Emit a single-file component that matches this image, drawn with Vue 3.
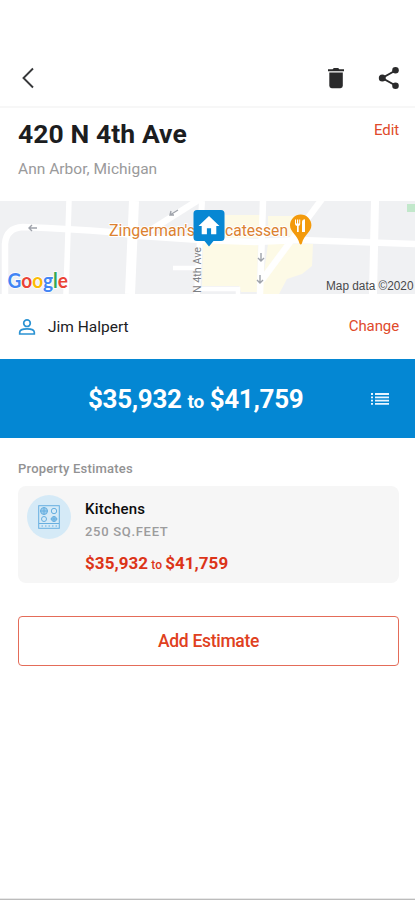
<script setup>
const property = { address: '420 N 4th Ave', city: 'Ann Arbor, Michigan', contact: 'Jim Halpert' }
const range = { low: '$35,932', high: '$41,759' }
const estimates = [{ name: 'Kitchens', area: '250 SQ.FEET', ...range }]
</script>

<template>
  <main class="screen">
    <header class="toolbar">
      <svg class="back" width="14" height="22" viewBox="0 0 14 22"><path d="M12 1.500 2.500 11 12 20.500" /></svg>
      <div class="actions">
        <svg width="18" height="22" viewBox="0 0 18 22"><path d="M1 2.300h4.700L6.800 1h4.400l1.100 1.300H17v1.900H1zM2.300 5.400h13.500v13.400a2.400 2.400 0 0 1-2.400 2.400H4.700a2.400 2.400 0 0 1-2.400-2.400z" /></svg>
        <svg width="22" height="24" viewBox="0 0 22 24"><path class="link" d="M17.500 4.500 4.200 12l13.300 7.500" /><circle cx="17.500" cy="4.300" r="3.300" /><circle cx="4.300" cy="12" r="3.500" /><circle cx="17.500" cy="19.700" r="3.300" /></svg>
      </div>
    </header>

    <section class="address">
      <div>
        <h1>{{ property.address }}</h1>
        <p>{{ property.city }}</p>
      </div>
      <a class="edit">Edit</a>
    </section>

    <svg class="map" width="415" height="93" viewBox="0 0 415 93">
      <rect width="415" height="93" fill="#f0f1f3" />
      <path d="M225 14h35v23h-35zM268 15h37l-14 20h-23zM203 42h55l-1 49h-16l-2-6h-37zM268 43h45l-1 22-10 8-15 5-8 15h-18z" fill="#fdfae6" />
      <rect x="407" y="3" width="8" height="8" fill="#c2e8cb" />
      <g fill="none" stroke="#fff" stroke-width="6.500">
        <path d="M5 93V43Q6 27 23 26C50 27 86 29 110 31L140 35 200 39 255 41 300 39 415 43" />
        <path d="M69 0 66 93" stroke-width="5.500" />
        <path d="M134 0 130 93" stroke-width="10" />
        <path d="M143 34 200-2" />
        <path d="M202 0 197 93" stroke-width="6" />
        <path d="M263 0 260 93" />
        <path d="M262 79 322-2" />
        <path d="M375 0 373 93" stroke-width="8" />
        <path d="M173 67H198M200 88H238V93" stroke-width="4.500" />
      </g>
      <g fill="none" stroke="#9fa3ab" stroke-width="1.400">
        <path d="M37 27h-8m3-3-3 3 3 3M178 9l-8 5m1-4-1 4 4 0M261 52v8m-3-3 3 3 3-3M260 74v8m-3-3 3 3 3-3" />
      </g>
      <g class="place">
        <text x="109" y="35" textLength="86" lengthAdjust="spacingAndGlyphs">Zingerman's</text>
        <text x="225" y="35" textLength="63" lengthAdjust="spacingAndGlyphs">catessen</text>
      </g>
      <text class="street" transform="translate(200.500 92) rotate(-90)" textLength="46" lengthAdjust="spacingAndGlyphs">N 4th Ave</text>
      <path d="M197 9h24a3.500 3.500 0 0 1 3.500 3.500v24a3.500 3.500 0 0 1-3.500 3.500h-7.500L209 45.500 204.500 40H197a3.500 3.500 0 0 1-3.500-3.500v-24A3.500 3.500 0 0 1 197 9z" fill="#0787d3" />
      <path d="m209 15-10.500 10h3.200v8.300h5.200v-6h4.200v6h5.200V25h3.200z" fill="#fff" />
      <path d="M300.700 13.500a10.700 10.700 0 0 1 10.700 10.700c0 6.800-7.600 9.700-9.500 18.300q-1.200 2.200-2.400 0c-1.900-8.600-9.500-11.500-9.500-18.300a10.700 10.700 0 0 1 10.700-10.700z" fill="#f39a0c" />
      <path d="M295 18.500h1v4h1v-4h1.200v4h1v-4h1v4.500q0 1.500-1.500 2V31H297v-6q-2-.5-2-2zM302 31V21q0-2.500 3-2.800V31z" fill="#fff" />
      <text class="google" x="7.500" y="87" textLength="60.500" lengthAdjust="spacingAndGlyphs"><tspan fill="#4285f4">G</tspan><tspan fill="#ea4335">o</tspan><tspan fill="#fbbc05">o</tspan><tspan fill="#4285f4">g</tspan><tspan fill="#34a853">l</tspan><tspan fill="#ea4335">e</tspan></text>
      <text class="credit" x="326" y="89" textLength="87.500" lengthAdjust="spacingAndGlyphs">Map data ©2020</text>
    </svg>

    <section class="contact">
      <svg width="18" height="18" viewBox="0 0 18 18"><circle cx="9" cy="5.200" r="3.300" /><path d="M1.700 16v-1.800C1.700 11.500 6 10.800 9 10.800s7.300.7 7.300 3.400V16z" /></svg>
      <span>{{ property.contact }}</span>
      <a>Change</a>
    </section>

    <section class="total">
      <div class="range"><b>{{ range.low }}</b><i>to</i><b>{{ range.high }}</b></div>
      <svg width="20" height="14" viewBox="0 0 20 14"><path d="M1 2h2M5 2h14M1 5.300h2M5 5.300h14M1 8.600h2M5 8.600h14M1 11.900h2M5 11.900h14" /></svg>
    </section>

    <section class="estimates">
      <h2>Property Estimates</h2>
      <article v-for="item in estimates" :key="item.name" class="card">
        <div class="badge">
          <svg width="22" height="24" viewBox="0 0 22 24">
            <rect x=".7" y=".7" width="20.600" height="22.600" />
            <path d="M1 18.500h20M3.500 21h1.500M7 21h1.500M10.500 21h1.500M14 21h1.500M17.500 21h1.500" />
            <circle cx="6" cy="6" r="3.500" class="lit" /><circle cx="16" cy="6" r="2.700" /><circle cx="6" cy="14" r="2.500" /><circle cx="16" cy="14" r="2.500" class="lit" />
            <path d="M2 6h8M6 2v8M12.500 14h7M16 11v6" />
          </svg>
        </div>
        <div class="details">
          <h3>{{ item.name }}</h3>
          <p>{{ item.area }}</p>
          <div class="price"><b>{{ item.low }}</b><i>to</i><b>{{ item.high }}</b></div>
        </div>
      </article>
      <button>Add Estimate</button>
    </section>
    <footer></footer>
  </main>
</template>

<style>
body { background: #fff; }
</style>

<style scoped>
* { box-sizing: border-box; margin: 0; }
.screen { width: 415px; height: 900px; display: flex; flex-direction: column; overflow: hidden; background: #fff; color: #202124; font-family: Roboto, sans-serif; white-space: nowrap; }
i { font-style: normal; }
a { color: #e04a2b; }
.toolbar { height: 108px; padding: 49px 15px 0 21px; border-bottom: 2px solid #f7f7f7; display: flex; align-items: center; justify-content: space-between; }
.back { fill: none; stroke: #37383a; stroke-width: 1.900; }
.actions { display: flex; align-items: center; gap: 33px; fill: #2a2a2b; }
.link { fill: none; stroke: #2a2a2b; stroke-width: 2; }
.address { height: 93px; padding: 10px 16px 0 18px; display: flex; justify-content: space-between; }
h1 { font-size: 26.500px; line-height: 32px; font-weight: 700; letter-spacing: .08px; color: #1c1d1f; }
.address p { margin-top: 9px; font-size: 15.500px; line-height: 20px; letter-spacing: .03px; color: #9a9a9b; }
.edit { margin-top: 2px; font-size: 15px; line-height: 20px; letter-spacing: -.1px; }
.map { flex: none; display: block; }
.place { font: 16.500px Roboto, sans-serif; fill: #dc8130; stroke: #fff; stroke-width: 2px; paint-order: stroke; }
.street { font: 11.500px Roboto, sans-serif; fill: #7d8084; }
.google { font: 700 20.500px Lato, sans-serif; stroke: #fff; stroke-width: 1.500px; paint-order: stroke; }
.credit { font: 12.500px "Liberation Sans", sans-serif; fill: #48494b; }
.contact { height: 65px; padding: 0 16px 0 18px; display: flex; align-items: center; }
.contact svg { fill: none; stroke: #2b93d3; stroke-width: 1.700; }
.contact span { margin-left: 12px; font-size: 15.500px; line-height: 20px; }
.contact a { margin: 0 0 1px auto; font-size: 15px; letter-spacing: -.1px; line-height: 20px; }
.total { height: 79px; padding: 0 25px 0 88px; display: flex; align-items: center; justify-content: space-between; background: #0487d3; color: #fff; }
.range, .price { display: flex; align-items: baseline; }
.range { font-size: 26px; letter-spacing: -.32px; }
.range i { width: 28px; text-align: center; font-size: 19px; font-weight: 700; }
.total svg { fill: none; stroke: #e8f5ff; stroke-width: 1.800; }
.estimates { flex: 1; padding: 22px 16px 0 18px; }
h2 { font-size: 13px; line-height: 18px; font-weight: 500; letter-spacing: .2px; color: #929293; }
.card { height: 97px; margin-top: 8px; padding: 9px; display: flex; gap: 14px; border-radius: 8px; background: #f6f6f6; }
.badge { flex: none; width: 44px; height: 44px; border-radius: 50%; display: grid; place-items: center; background: #d5eaf7; }
.badge svg { fill: none; stroke: #67afe0; stroke-width: 1; }
.badge .lit { fill: #9dccec; }
h3 { margin-top: 4px; font-size: 15px; line-height: 20px; font-weight: 500; letter-spacing: .2px; color: #0c0c0d; }
.details p { margin-top: 4px; font-size: 13px; line-height: 18px; font-weight: 500; letter-spacing: .7px; color: #9c9c9d; }
.price { margin-top: 11px; font-size: 17px; line-height: 22px; letter-spacing: .06px; color: #dc3418; }
.price b { font-weight: 700; }
.price i { width: 17px; text-align: center; font-size: 12px; font-weight: 500; }
button { display: block; width: 100%; height: 50px; margin-top: 33px; padding: 0; border: 1px solid #e46c59; border-radius: 4px; background: #fff; color: #e04020; font: 500 17.500px Roboto, sans-serif; letter-spacing: -.3px; }
footer { height: 2px; border-top: 1px solid #e8e8e8; background: #bcbcbc; }
</style>
